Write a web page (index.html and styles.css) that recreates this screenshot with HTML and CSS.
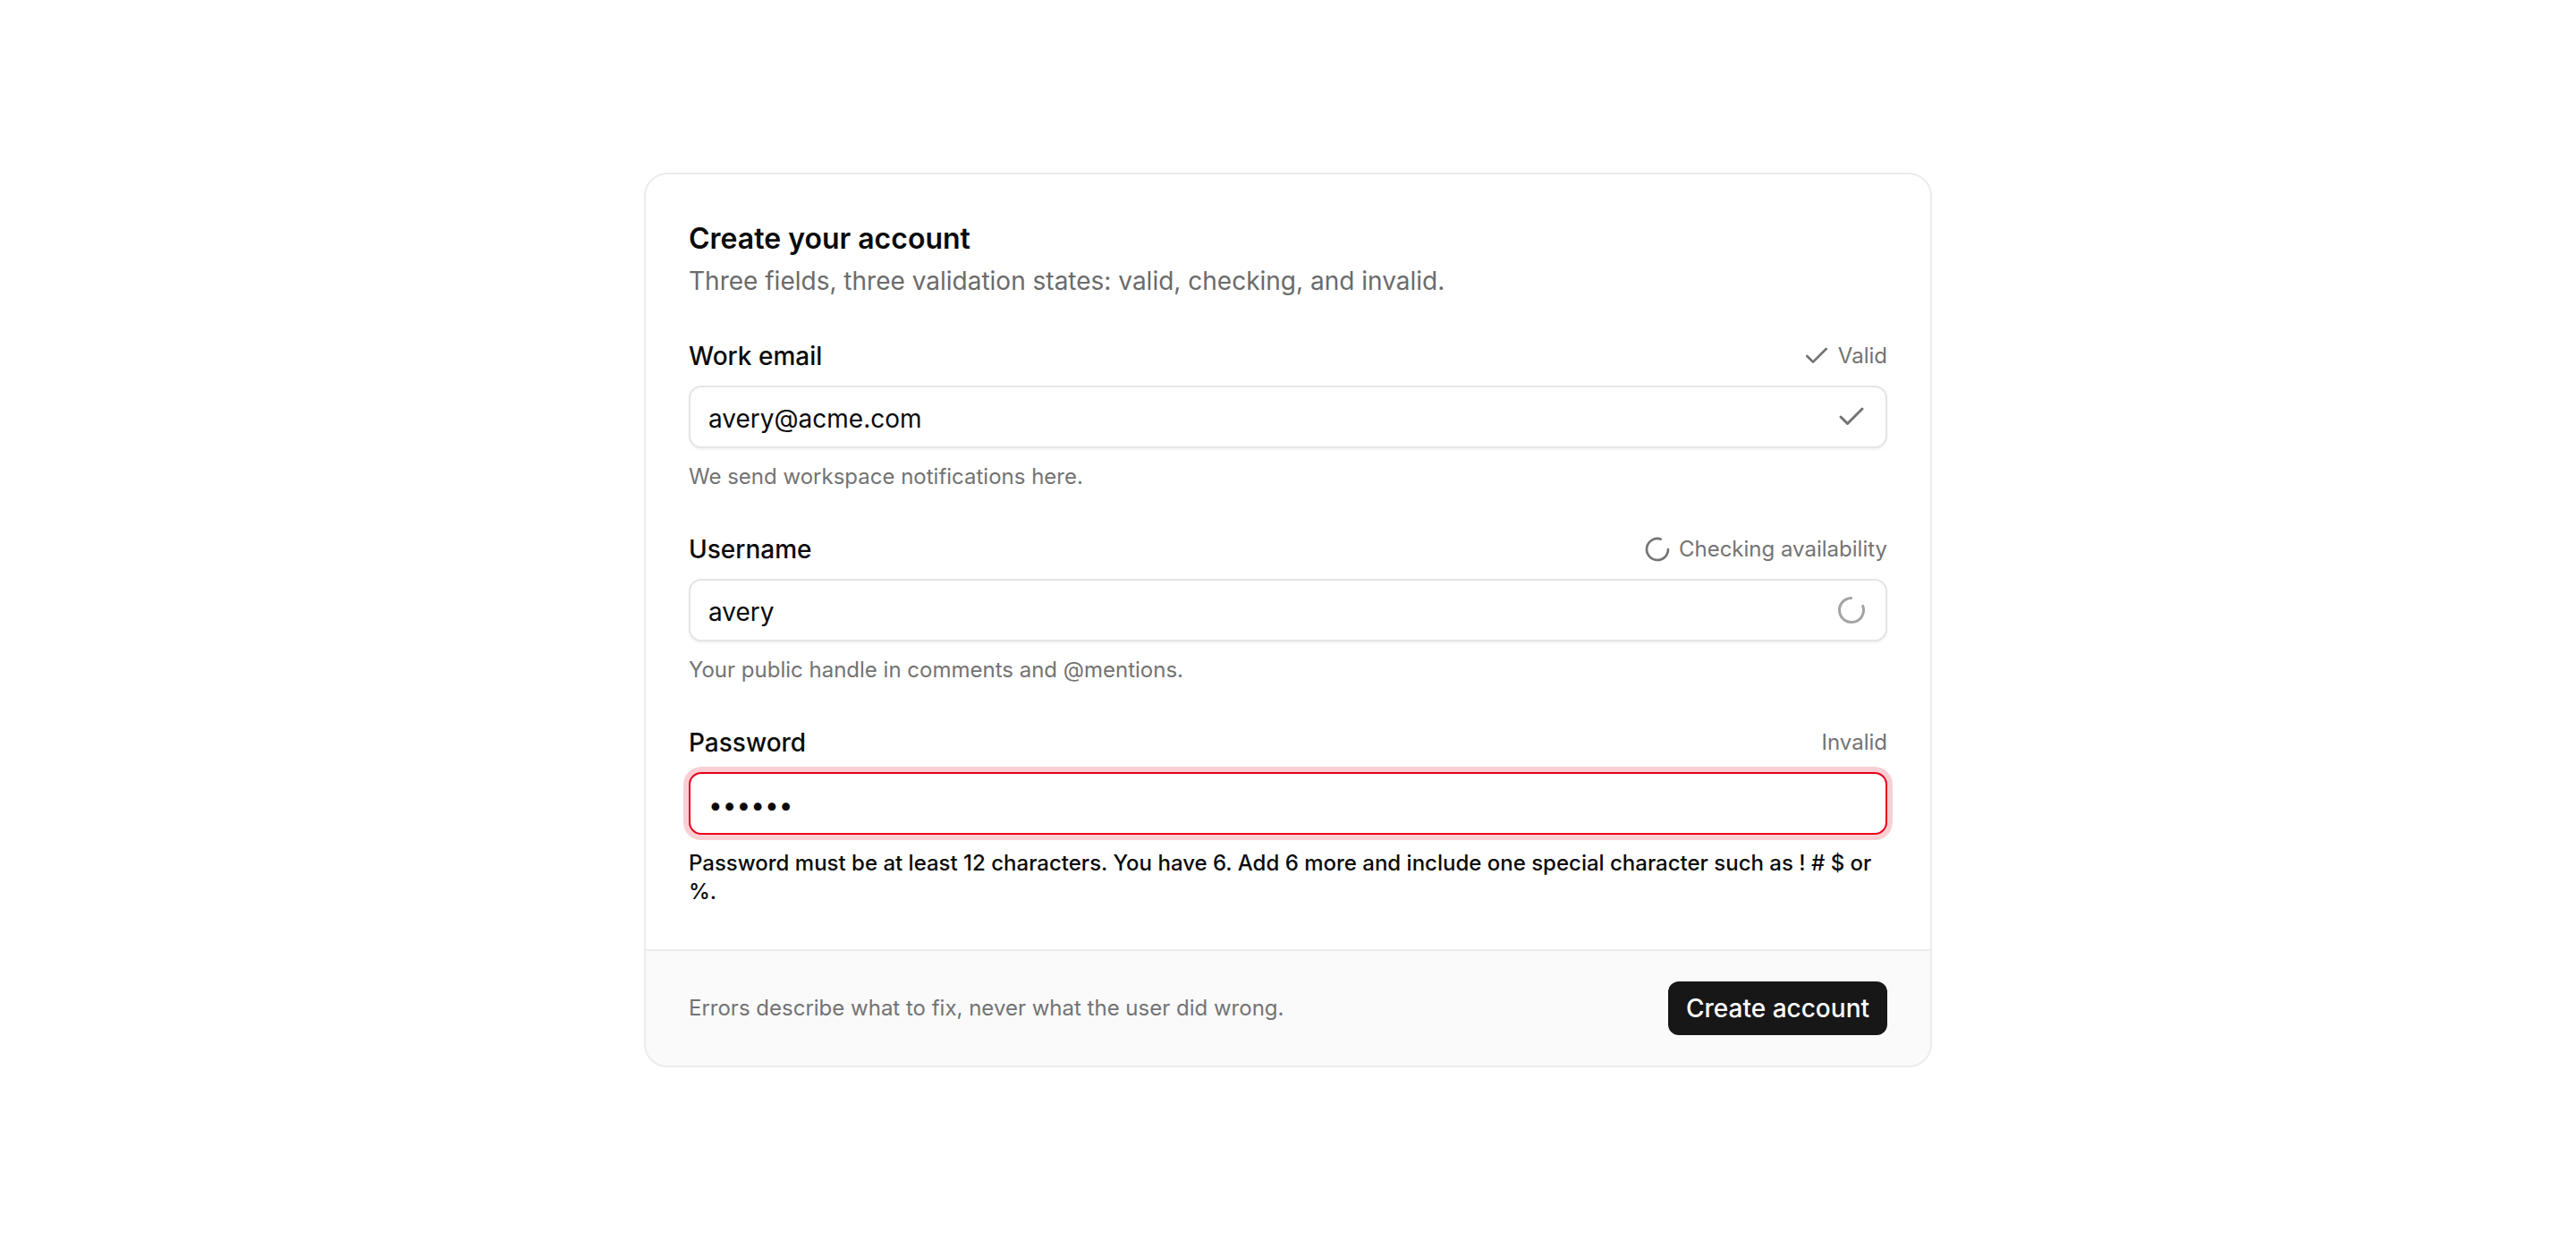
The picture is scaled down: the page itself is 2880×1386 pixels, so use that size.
FILE: index.html
```html
<!DOCTYPE html>
<html lang="en">
<head>
<meta charset="utf-8">
<title>Create your account</title>
<link rel="stylesheet" href="styles.css">
</head>
<body>
<main class="card">
  <section class="card-body">
    <header class="card-header">
      <h1 class="title">Create your account</h1>
      <p class="subtitle">Three fields, three validation states: valid, checking, and invalid.</p>
    </header>

    <div class="fields">
      <div class="field">
        <div class="label-row">
          <label class="label" for="email">Work email</label>
          <span class="status">
            <svg class="status-icon" viewBox="0 0 24 24" fill="none" stroke="currentColor" stroke-width="2" stroke-linecap="round" stroke-linejoin="round"><path d="M20 6 9 17l-5-5"/></svg>
            Valid
          </span>
        </div>
        <div class="control">
          <input class="input" id="email" type="email" value="avery@acme.com" readonly>
          <svg class="control-icon check" viewBox="0 0 24 24" fill="none" stroke="currentColor" stroke-width="2" stroke-linecap="round" stroke-linejoin="round"><path d="M20 6 9 17l-5-5"/></svg>
        </div>
        <p class="helper">We send workspace notifications here.</p>
      </div>

      <div class="field">
        <div class="label-row">
          <label class="label" for="username">Username</label>
          <span class="status">
            <svg class="status-icon" viewBox="0 0 24 24" fill="none" stroke="currentColor" stroke-width="2" stroke-linecap="round" stroke-linejoin="round"><path d="M21 12a9 9 0 1 1-6.219-8.56"/></svg>
            Checking availability
          </span>
        </div>
        <div class="control">
          <input class="input" id="username" type="text" value="avery" readonly>
          <svg class="control-icon spinner" viewBox="0 0 24 24" fill="none" stroke="currentColor" stroke-width="2" stroke-linecap="round" stroke-linejoin="round"><path d="M21 12a9 9 0 1 1-6.219-8.56"/></svg>
        </div>
        <p class="helper">Your public handle in comments and @mentions.</p>
      </div>

      <div class="field">
        <div class="label-row">
          <label class="label" for="password">Password</label>
          <span class="status">Invalid</span>
        </div>
        <div class="control control-invalid">
          <input class="input input-password" id="password" type="password" value="abcdef" readonly>
        </div>
        <p class="error">Password must be at least 12 characters. You have 6. Add 6 more and include one special character such as ! # $ or %.</p>
      </div>
    </div>
  </section>

  <footer class="card-footer">
    <p class="footer-note">Errors describe what to fix, never what the user did wrong.</p>
    <button class="button" type="button">Create account</button>
  </footer>
</main>
</body>
</html>
```

FILE: styles.css
```css
* {
  box-sizing: border-box;
}

html, body {
  margin: 0;
  padding: 0;
}

body {
  min-height: 100vh;
  display: flex;
  align-items: center;
  justify-content: center;
  background: #ffffff;
  font-family: Inter, "Noto Sans", "Liberation Sans", sans-serif;
  color: #0a0a0a;
  -webkit-font-smoothing: antialiased;
}

.card {
  width: 1440px;
  background: #ffffff;
  border: 2px solid #ebebeb;
  border-radius: 26px;
  overflow: hidden;
}

.card-body {
  padding: 48px 48px 48px;
}

.title {
  margin: 0;
  font-size: 32px;
  line-height: 48px;
  font-weight: 600;
  color: #0a0a0a;
}

.subtitle {
  margin: 3px 0 0;
  font-size: 28px;
  line-height: 40px;
  color: #6b6b6b;
}

.fields {
  margin-top: 44px;
  display: flex;
  flex-direction: column;
  gap: 45px;
}

.field {
  display: flex;
  flex-direction: column;
}

.label-row {
  display: flex;
  align-items: center;
  justify-content: space-between;
  height: 40px;
}

.label {
  font-size: 28px;
  line-height: 40px;
  font-weight: 500;
  color: #0a0a0a;
}

.status {
  display: flex;
  align-items: center;
  gap: 8px;
  font-size: 24px;
  line-height: 40px;
  color: #737373;
}

.status-icon {
  width: 32px;
  height: 32px;
  flex: none;
}

.control {
  margin-top: 13px;
  height: 70px;
  display: flex;
  align-items: center;
  gap: 12px;
  padding: 0 20px;
  background: #ffffff;
  border: 2px solid #e5e5e5;
  border-radius: 14px;
  box-shadow: 0 2px 3px rgba(0, 0, 0, 0.05);
}

.control-invalid {
  border-color: #e7001b;
  box-shadow: 0 0 0 6px rgba(231, 0, 27, 0.19);
}

.input {
  flex: 1;
  min-width: 0;
  height: 100%;
  padding: 4px 0 0;
  border: none;
  outline: none;
  background: transparent;
  font-family: inherit;
  font-size: 28px;
  color: #0a0a0a;
}

.input-password {
  font-size: 28px;
}

.control-icon {
  width: 36px;
  height: 36px;
  flex: none;
}

.check {
  color: #737373;
}

.spinner {
  color: #a3a3a3;
  transform: rotate(-20deg);
}

.helper {
  margin: 16px 0 0;
  font-size: 24px;
  line-height: 32px;
  color: #737373;
}

.error {
  margin: 16px 0 0;
  font-size: 24px;
  line-height: 32px;
  font-weight: 500;
  color: #0a0a0a;
}

.card-footer {
  display: flex;
  align-items: center;
  justify-content: space-between;
  padding: 34px 48px;
  background: #fafafa;
  border-top: 2px solid #ebebeb;
}

.footer-note {
  margin: 0;
  font-size: 24px;
  line-height: 32px;
  color: #737373;
}

.button {
  height: 60px;
  padding: 0 20px;
  border: none;
  border-radius: 12px;
  background: #171717;
  color: #ffffff;
  font-family: inherit;
  font-size: 28px;
  font-weight: 500;
  cursor: pointer;
}
```
